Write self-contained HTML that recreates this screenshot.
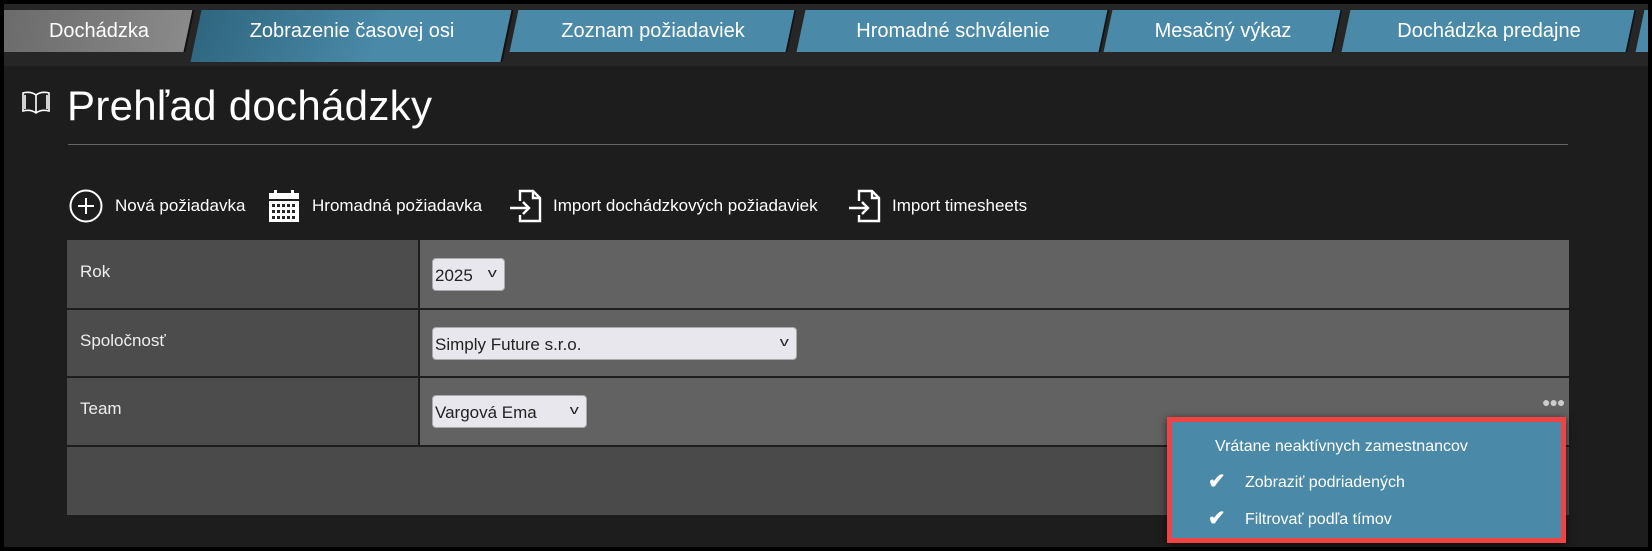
<!DOCTYPE html>
<html><head><meta charset="utf-8"><style>
*{box-sizing:border-box;margin:0;padding:0}
body{width:1652px;height:551px;background:#000;overflow:hidden;font-family:"Liberation Sans",sans-serif;position:relative}
.frame{position:absolute;left:4px;top:4px;width:1644px;height:543px;background:#1d1d1d;overflow:hidden}
.bar{position:absolute;left:0;top:0;width:100%;height:62px;background:#262626}
.tab{position:absolute;top:6px;height:42px;color:#fff;font-size:20px;display:flex;align-items:center;justify-content:center}
.tab::before{content:"";position:absolute;inset:0;transform:skewX(-12deg);background:#4a8aa8;z-index:0;border-right:2px solid #111}
.tab span{position:relative;z-index:1}
.t0::before{background:linear-gradient(90deg,#6a6a6a,#8a8a8a)}
.act1{height:52px;align-items:flex-start;padding-top:10px}
.act1::before{background:linear-gradient(100deg,#2f6680,#4a8aa8 60%)}
.abs{position:absolute}
.title{left:63px;top:78px;font-size:42px;color:#fff;font-weight:300;letter-spacing:0.3px}
.hr{left:64px;top:140px;width:1500px;height:1px;background:#666}
.act{top:185px;font-size:17px;color:#fff;display:flex;align-items:center}
.tbl{left:63px;top:236px;width:1502px;height:275px;background:#4a4a4a}
.row{position:absolute;left:0;width:100%;background:#4c4c4c;border-bottom:2px solid #1e1e1e}
.row .v{position:absolute;left:351px;top:0;right:0;bottom:0;background:#626262;border-left:2px solid #1e1e1e}
.row .l{position:absolute;left:13px;color:#eee;font-size:17px}
.sel{position:absolute;background:#e9e7ee;border:1px solid #aaa;border-radius:4px;color:#222;font-size:17px;padding:7px 0 0 2px;height:33px}
.sel i{position:absolute;right:9px;top:6px;font-style:normal;font-size:13px;transform:scaleX(1.4)}
.pop{left:1163px;top:413px;width:399px;height:126px;border:5px solid #f04444;background:#4a8aa8;box-shadow:0 2px 8px rgba(0,0,0,.6)}
.pop div{position:absolute;color:#fff;font-size:16px}
.pop .ck{font-size:21px;font-weight:bold}
</style></head><body>
<div class="frame">
<div class="bar"></div>
<div class="tab t0" style="left:-10px;width:196px"><span style="margin-left:14px">Dochádzka</span></div>
<div class="tab act1" style="left:192px;width:312px"><span>Zobrazenie časovej osi</span></div>
<div class="tab" style="left:510px;width:278px"><span>Zoznam požiadaviek</span></div>
<div class="tab" style="left:797px;width:304px"><span>Hromadné schválenie</span></div>
<div class="tab" style="left:1104px;width:230px"><span>Mesačný výkaz</span></div>
<div class="tab" style="left:1342px;width:286px"><span>Dochádzka predajne</span></div>
<div class="tab" style="left:1636px;width:60px"><span></span></div>

<svg class="abs" style="left:17px;top:86px" width="30" height="26" viewBox="0 0 30 26" fill="none" stroke="#fff" stroke-width="1.6"><path d="M15 5C11 2 6 2 2 3v18c4-1 9-1 13 2 4-3 9-3 13-2V3c-4-1-9-1-13 2zM15 5v18"/><path d="M4 5v14M26 5v14"/></svg>
<div class="abs title">Prehľad dochádzky</div>
<div class="abs hr"></div>

<div class="abs act" style="left:65px"><svg width="34" height="34" viewBox="0 0 34 34" fill="none" stroke="#fff" stroke-width="2"><circle cx="17" cy="17" r="15.5"/><path d="M17 9v16M9 17h16"/></svg><span style="margin-left:12px">Nová požiadavka</span></div>
<div class="abs act" style="left:264px"><svg width="32" height="34" viewBox="0 0 32 34" fill="#fff"><rect x="1" y="4" width="30" height="6"/><rect x="6" y="1" width="3" height="5"/><rect x="23" y="1" width="3" height="5"/><g><rect x="1" y="12" width="30" height="21"/></g><g fill="#262626"><rect x="4" y="15" width="3" height="3"/><rect x="9" y="15" width="3" height="3"/><rect x="14" y="15" width="3" height="3"/><rect x="19" y="15" width="3" height="3"/><rect x="24" y="15" width="3" height="3"/><rect x="4" y="21" width="3" height="3"/><rect x="9" y="21" width="3" height="3"/><rect x="14" y="21" width="3" height="3"/><rect x="19" y="21" width="3" height="3"/><rect x="24" y="21" width="3" height="3"/><rect x="4" y="27" width="3" height="3"/><rect x="9" y="27" width="3" height="3"/><rect x="14" y="27" width="3" height="3"/><rect x="19" y="27" width="3" height="3"/><rect x="24" y="27" width="3" height="3"/></g></svg><span style="margin-left:12px">Hromadná požiadavka</span></div>
<div class="abs act" style="left:505px"><svg width="34" height="34" viewBox="0 0 34 34" fill="none" stroke="#fff" stroke-width="2.4"><path d="M11 12V2h13l7 7v23H11v-6"/><path d="M24 2v7h7"/><path d="M1 19h19M14 13l6 6-6 6"/></svg><span style="margin-left:10px">Import dochádzkových požiadaviek</span></div>
<div class="abs act" style="left:844px"><svg width="34" height="34" viewBox="0 0 34 34" fill="none" stroke="#fff" stroke-width="2.4"><path d="M11 12V2h13l7 7v23H11v-6"/><path d="M24 2v7h7"/><path d="M1 19h19M14 13l6 6-6 6"/></svg><span style="margin-left:10px">Import timesheets</span></div>

<div class="abs tbl">
<div class="row" style="top:0;height:70px"><div class="v"></div><div class="l" style="top:22px">Rok</div><div class="sel" style="left:365px;top:18px;width:73px">2025<i>v</i></div></div>
<div class="row" style="top:70px;height:68px"><div class="v"></div><div class="l" style="top:21px">Spoločnosť</div><div class="sel" style="left:365px;top:17px;width:365px">Simply Future s.r.o.<i>v</i></div></div>
<div class="row" style="top:138px;height:69px"><div class="v"></div><div class="l" style="top:21px">Team</div><div class="sel" style="left:365px;top:17px;width:155px">Vargová Ema<i>v</i></div>
<div style="position:absolute;left:1475px;top:16px;color:#ccc;font-size:14px;letter-spacing:-1px">●●●</div></div>
</div>

<div class="abs pop">
<div style="left:43px;top:16px">Vrátane neaktívnych zamestnancov</div>
<div class="ck" style="left:36px;top:47px">✔</div><div style="left:73px;top:52px">Zobraziť podriadených</div>
<div class="ck" style="left:36px;top:84px">✔</div><div style="left:73px;top:89px">Filtrovať podľa tímov</div>
</div>
</div>
</body></html>
